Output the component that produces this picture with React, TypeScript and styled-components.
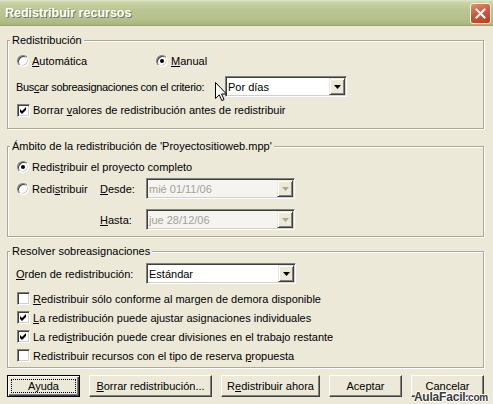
import React from "react";
import styled, { createGlobalStyle, css } from "styled-components";

const GlobalStyle = createGlobalStyle`
  html, body {
    margin: 0;
    padding: 0;
  }
  body {
    background: #ece9d8;
    font-family: "Liberation Sans", Arial, sans-serif;
    font-size: 11px;
    color: #000;
  }
`;

const Window = styled.div`
  position: relative;
  width: 493px;
  height: 404px;
  overflow: hidden;
  background: #ece9d8;
  display: flex;
  flex-direction: column;
`;

const TitleBar = styled.div`
  flex: none;
  height: 26px;
  box-sizing: border-box;
  display: flex;
  align-items: center;
  justify-content: space-between;
  padding: 0 2px 0 5px;
  background: linear-gradient(
    180deg,
    #dfe6c6 0px,
    #c7d1a3 3px,
    #bac691 10px,
    #b6c28d 18px,
    #aab880 24px,
    #97a46e 26px
  );
`;

const Title = styled.span`
  font-weight: bold;
  font-size: 12.5px;
  color: #fff;
  text-shadow: 1px 1px 0 #6f7a4c;
`;

const CloseButton = styled.div`
  width: 21px;
  height: 21px;
  box-sizing: border-box;
  border: 1px solid #f4f4ee;
  border-radius: 3px;
  background: linear-gradient(160deg, #e4907a 0%, #d0593c 45%, #b8401f 100%);
  display: flex;
  align-items: center;
  justify-content: center;
`;

const Body = styled.div`
  display: flex;
  flex-direction: column;
  padding: 0 9px 0 7px;
`;

const Group = styled.div<{ $mt: number; $pt: number; $pb: number }>`
  position: relative;
  display: flex;
  flex-direction: column;
  margin-top: ${(p) => p.$mt}px;
  padding: ${(p) => p.$pt}px 8px ${(p) => p.$pb}px;
  border: 1px solid #aca899;
  box-shadow: inset 1px 1px 0 #fff, 1px 1px 0 #fff;
`;

const Legend = styled.span`
  position: absolute;
  top: -7px;
  left: 2px;
  padding: 0 2px;
  line-height: 13px;
  background: #ece9d8;
`;

const Row = styled.div<{ $h: number; $mt?: number; $pl?: number }>`
  display: flex;
  align-items: center;
  height: ${(p) => p.$h}px;
  margin-top: ${(p) => p.$mt ?? 0}px;
  padding-left: ${(p) => p.$pl ?? 0}px;
`;

const Choice = styled.label<{ $w?: number }>`
  display: inline-flex;
  align-items: center;
  gap: 3px;
  margin-left: 1px;
  box-sizing: border-box;
  width: ${(p) => (p.$w ? `${p.$w}px` : "auto")};
  white-space: nowrap;
`;

const Radio = styled.span<{ $on?: boolean }>`
  position: relative;
  flex: none;
  width: 12px;
  height: 12px;
  box-sizing: border-box;
  border-radius: 50%;
  border: 1px solid;
  border-color: #808080 #fff #fff #808080;
  box-shadow: inset 1px 1px 0 #404040, inset -1px -1px 0 #d4d0c8;
  background: #fff;
  &::after {
    content: "";
    display: ${(p) => (p.$on ? "block" : "none")};
    position: absolute;
    left: 3px;
    top: 3px;
    width: 4px;
    height: 4px;
    border-radius: 50%;
    background: #000;
  }
`;

const CheckBox = styled.span`
  flex: none;
  width: 13px;
  height: 13px;
  box-sizing: border-box;
  border: 1px solid;
  border-color: #808080 #fff #fff #808080;
  box-shadow: inset 1px 1px 0 #404040, inset -1px -1px 0 #d4d0c8;
  background: #fff;
  display: flex;
  align-items: center;
  justify-content: center;
`;

const FieldLabel = styled.span<{ $w: number; $tight?: boolean }>`
  flex: none;
  width: ${(p) => p.$w}px;
  white-space: nowrap;
  letter-spacing: ${(p) => (p.$tight ? "-0.3px" : "normal")};
`;

const Key = styled.span`
  text-decoration: underline;
`;

const Combo = styled.div<{ $w: number; $disabled?: boolean }>`
  flex: none;
  width: ${(p) => p.$w}px;
  height: 21px;
  box-sizing: border-box;
  display: flex;
  align-items: center;
  padding: 1px;
  border: 1px solid;
  border-color: #808080 #fff #fff #808080;
  box-shadow: inset 1px 1px 0 #404040, inset -1px -1px 0 #d4d0c8;
  background: ${(p) => (p.$disabled ? "#f5f4ef" : "#fff")};
`;

const ComboText = styled.span<{ $disabled?: boolean }>`
  flex: 1;
  padding-left: 1px;
  white-space: nowrap;
  color: ${(p) => (p.$disabled ? "#a3a199" : "#000")};
`;

const DropButton = styled.span`
  flex: none;
  width: 16px;
  height: 17px;
  box-sizing: border-box;
  display: flex;
  align-items: center;
  justify-content: center;
  background: #ece9d8;
  border: 1px solid;
  border-color: #ece9d8 #404040 #404040 #ece9d8;
  box-shadow: inset 1px 1px 0 #fff, inset -1px -1px 0 #808080;
`;

const ButtonRow = styled.div`
  display: flex;
  justify-content: space-between;
  margin-top: 7px;
`;

const Button = styled.button<{ $w: number; $default?: boolean }>`
  position: relative;
  width: ${(p) => p.$w}px;
  height: 22px;
  box-sizing: border-box;
  margin: 0;
  padding: 0;
  font: inherit;
  color: #000;
  background: #ece9d8;
  border: 1px solid;
  border-color: #fff #404040 #404040 #fff;
  box-shadow: inset -1px -1px 0 #808080;
  ${(p) =>
    p.$default &&
    css`
      border-color: #000;
      box-shadow: inset 1px 1px 0 #fff, inset -1px -1px 0 #404040,
        inset -2px -2px 0 #808080;
      &::after {
        content: "";
        position: absolute;
        inset: 3px;
        border: 1px dotted #000;
      }
    `}
`;

const Cursor = styled.svg`
  position: absolute;
  left: 215px;
  top: 82px;
`;

const Watermark = styled.div`
  position: absolute;
  right: 5px;
  bottom: 1px;
  line-height: 10px;
  font-weight: bold;
  font-size: 12px;
  letter-spacing: -0.2px;
  color: #3a3a3a;
  text-shadow: 1px 0 0 #fff, -1px 0 0 #fff, 0 1px 0 #fff, 0 -1px 0 #fff;
`;

const WatermarkTld = styled.span`
  font-size: 10px;
`;

const Arrow = ({ disabled }: { disabled?: boolean }) => (
  <svg width="7" height="4" viewBox="0 0 7 4">
    <polygon points="0,0 7,0 3.5,4" fill={disabled ? "#aca899" : "#000"} />
  </svg>
);

const Check = () => (
  <svg width="11" height="11" viewBox="0 0 11 11">
    <polygon points="2,4 4,6 8,2 8,5 4,9 2,7" fill="#000" />
  </svg>
);

type ChoiceProps = { on?: boolean; w?: number; children: React.ReactNode };

const RadioItem = ({ on, w, children }: ChoiceProps) => (
  <Choice $w={w}>
    <Radio $on={on} />
    <span>{children}</span>
  </Choice>
);

const CheckItem = ({ on, children }: ChoiceProps) => (
  <Choice>
    <CheckBox>{on && <Check />}</CheckBox>
    <span>{children}</span>
  </Choice>
);

const Dropdown = ({ w, value, disabled }: { w: number; value: string; disabled?: boolean }) => (
  <Combo $w={w} $disabled={disabled}>
    <ComboText $disabled={disabled}>{value}</ComboText>
    <DropButton>
      <Arrow disabled={disabled} />
    </DropButton>
  </Combo>
);

export default function App() {
  return (
    <Window>
      <GlobalStyle />
      <TitleBar>
        <Title>Redistribuir recursos</Title>
        <CloseButton>
          <svg width="11" height="11" viewBox="0 0 11 11">
            <path d="M1.5 1.5 L9.5 9.5 M9.5 1.5 L1.5 9.5" stroke="#fff" strokeWidth="2" strokeLinecap="square" />
          </svg>
        </CloseButton>
      </TitleBar>

      <Body>
        <Group $mt={14} $pt={10} $pb={8}>
          <Legend>Redistribución</Legend>
          <Row $h={20}>
            <RadioItem w={138}>
              <Key>A</Key>utomática
            </RadioItem>
            <RadioItem on>
              <Key>M</Key>anual
            </RadioItem>
          </Row>
          <Row $h={21} $mt={5}>
            <FieldLabel $w={209} $tight>
              Bus<Key>c</Key>ar sobreasignaciones con el criterio:
            </FieldLabel>
            <Dropdown w={122} value="Por días" />
          </Row>
          <Row $h={20} $mt={3}>
            <CheckItem on>
              Borrar <Key>v</Key>alores de redistribución antes de redistribuir
            </CheckItem>
          </Row>
        </Group>

        <Group $mt={17} $pt={10} $pb={6}>
          <Legend>Ámbito de la redistribución de 'Proyectositioweb.mpp'</Legend>
          <Row $h={20}>
            <RadioItem on>
              Redis<Key>t</Key>ribuir el proyecto completo
            </RadioItem>
          </Row>
          <Row $h={21} $mt={1}>
            <RadioItem w={83}>
              Redi<Key>s</Key>tribuir
            </RadioItem>
            <FieldLabel $w={46}>
              <Key>D</Key>esde:
            </FieldLabel>
            <Dropdown w={149} value="mié 01/11/06" disabled />
          </Row>
          <Row $h={21} $mt={10} $pl={84}>
            <FieldLabel $w={46}>
              <Key>H</Key>asta:
            </FieldLabel>
            <Dropdown w={149} value="jue 28/12/06" disabled />
          </Row>
        </Group>

        <Group $mt={14} $pt={11} $pb={2}>
          <Legend>Resolver sobreasignaciones</Legend>
          <Row $h={21}>
            <FieldLabel $w={130}>
              <Key>O</Key>rden de redistribución:
            </FieldLabel>
            <Dropdown w={150} value="Estándar" />
          </Row>
          <Row $h={19} $mt={5}>
            <CheckItem>
              <Key>R</Key>edistribuir sólo conforme al margen de demora disponible
            </CheckItem>
          </Row>
          <Row $h={19}>
            <CheckItem on>
              <Key>L</Key>a redistribución puede ajustar asignaciones individuales
            </CheckItem>
          </Row>
          <Row $h={19}>
            <CheckItem on>
              La redi<Key>s</Key>tribución puede crear divisiones en el trabajo restante
            </CheckItem>
          </Row>
          <Row $h={19}>
            <CheckItem>
              Redistribuir recursos con el tipo de reserva <Key>p</Key>ropuesta
            </CheckItem>
          </Row>
        </Group>

        <ButtonRow>
          <Button $w={73} $default>
            Ayuda
          </Button>
          <Button $w={123}>
            <Key>B</Key>orrar redistribución...
          </Button>
          <Button $w={99}>
            R<Key>e</Key>distribuir ahora
          </Button>
          <Button $w={73}>Aceptar</Button>
          <Button $w={73}>Cancelar</Button>
        </ButtonRow>
      </Body>

      <Cursor width="12" height="20" viewBox="0 0 12 20">
        <path
          d="M0.5 0.5 L0.5 16.5 L4.3 12.8 L6.8 18.6 L9 17.6 L6.6 12 L11.5 12 Z"
          fill="#fff"
          stroke="#000"
          strokeWidth="1"
          strokeLinejoin="miter"
        />
      </Cursor>

      <Watermark>
        AulaFacil<WatermarkTld>.com</WatermarkTld>
      </Watermark>
    </Window>
  );
}
